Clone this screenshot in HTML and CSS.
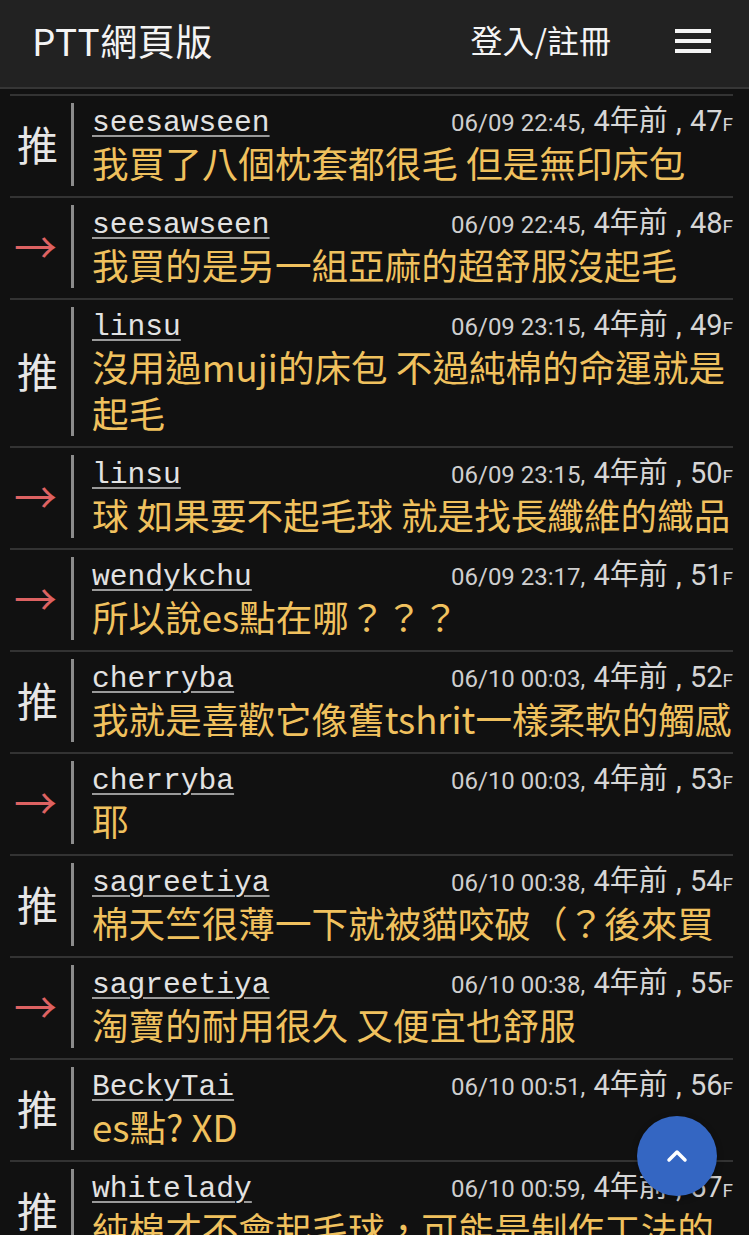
FILE: index.html
```html
<!DOCTYPE html>
<html lang="zh-Hant">
<head>
<meta charset="utf-8">
<title>PTT網頁版</title>
<link rel="stylesheet" href="styles.css">
</head>
<body>
<header class="topbar">
  <div class="brand">PTT網頁版</div>
  <div class="login">登入/註冊</div>
  <div class="menu" aria-label="menu"><span></span><span></span><span></span></div>
</header>
<main class="list">
  <div class="row">
    <div class="tag push">推</div>
    <div class="body">
      <div class="head"><span class="user">seesawseen</span><span class="meta"><span class="time">06/09 22:45,</span> 4年前 , 47<span class="f">F</span></span></div>
      <div class="text">我買了八個枕套都很毛 但是無印床包</div>
    </div>
  </div>
  <div class="row">
    <div class="tag arrow">→</div>
    <div class="body">
      <div class="head"><span class="user">seesawseen</span><span class="meta"><span class="time">06/09 22:45,</span> 4年前 , 48<span class="f">F</span></span></div>
      <div class="text">我買的是另一組亞麻的超舒服沒起毛</div>
    </div>
  </div>
  <div class="row">
    <div class="tag push">推</div>
    <div class="body">
      <div class="head"><span class="user">linsu</span><span class="meta"><span class="time">06/09 23:15,</span> 4年前 , 49<span class="f">F</span></span></div>
      <div class="text">沒用過muji的床包 不過純棉的命運就是起毛</div>
    </div>
  </div>
  <div class="row">
    <div class="tag arrow">→</div>
    <div class="body">
      <div class="head"><span class="user">linsu</span><span class="meta"><span class="time">06/09 23:15,</span> 4年前 , 50<span class="f">F</span></span></div>
      <div class="text">球 如果要不起毛球 就是找長纖維的織品</div>
    </div>
  </div>
  <div class="row">
    <div class="tag arrow">→</div>
    <div class="body">
      <div class="head"><span class="user">wendykchu</span><span class="meta"><span class="time">06/09 23:17,</span> 4年前 , 51<span class="f">F</span></span></div>
      <div class="text">所以說es點在哪？？？</div>
    </div>
  </div>
  <div class="row">
    <div class="tag push">推</div>
    <div class="body">
      <div class="head"><span class="user">cherryba</span><span class="meta"><span class="time">06/10 00:03,</span> 4年前 , 52<span class="f">F</span></span></div>
      <div class="text">我就是喜歡它像舊tshrit一樣柔軟的觸感</div>
    </div>
  </div>
  <div class="row">
    <div class="tag arrow">→</div>
    <div class="body">
      <div class="head"><span class="user">cherryba</span><span class="meta"><span class="time">06/10 00:03,</span> 4年前 , 53<span class="f">F</span></span></div>
      <div class="text">耶</div>
    </div>
  </div>
  <div class="row">
    <div class="tag push">推</div>
    <div class="body">
      <div class="head"><span class="user">sagreetiya</span><span class="meta"><span class="time">06/10 00:38,</span> 4年前 , 54<span class="f">F</span></span></div>
      <div class="text">棉天竺很薄一下就被貓咬破（？後來買</div>
    </div>
  </div>
  <div class="row">
    <div class="tag arrow">→</div>
    <div class="body">
      <div class="head"><span class="user">sagreetiya</span><span class="meta"><span class="time">06/10 00:38,</span> 4年前 , 55<span class="f">F</span></span></div>
      <div class="text">淘寶的耐用很久 又便宜也舒服</div>
    </div>
  </div>
  <div class="row">
    <div class="tag push">推</div>
    <div class="body">
      <div class="head"><span class="user">BeckyTai</span><span class="meta"><span class="time">06/10 00:51,</span> 4年前 , 56<span class="f">F</span></span></div>
      <div class="text">es點? XD</div>
    </div>
  </div>
  <div class="row">
    <div class="tag push">推</div>
    <div class="body">
      <div class="head"><span class="user">whitelady</span><span class="meta"><span class="time">06/10 00:59,</span> 4年前 , 57<span class="f">F</span></span></div>
      <div class="text">純棉才不會起毛球，可能是制作工法的</div>
    </div>
  </div>
</main>
<button class="totop" aria-label="top">
  <svg width="24" height="16" viewBox="0 0 24 16"><path d="M4 12 L12 4 L20 12" fill="none" stroke="#fff" stroke-width="3.5" stroke-linecap="round" stroke-linejoin="round"/></svg>
</button>
</body>
</html>
```
FILE: styles.css
```css
html, body {
  margin: 0;
  padding: 0;
  background: #111111;
}
body {
  font-family: "Noto Sans CJK TC", "Noto Sans", sans-serif;
  color: #e0e0e0;
  height: 1235px;
  overflow: hidden;
}
.topbar {
  height: 89px;
  box-sizing: border-box;
  background: #222222;
  border-bottom: 2px solid #363636;
  display: flex;
  align-items: flex-start;
  padding: 13px 38px 0 32px;
}
.brand {
  font-size: 37px;
  line-height: 54px;
  color: #f4f4f4;
  flex: 1;
  letter-spacing: 0.5px;
}
.login {
  font-size: 32px;
  line-height: 52px;
  color: #f4f4f4;
  margin-right: 64px;
}
.menu {
  width: 36px;
  display: flex;
  flex-direction: column;
  gap: 6.5px;
  padding-top: 16px;
}
.menu span {
  display: block;
  height: 3.5px;
  background: #f4f4f4;
}
.list {
  padding: 5px 16px 0 10px;
}
.row {
  border-top: 2px solid #333333;
  display: flex;
  padding: 7px 0 10px;
}
.tag {
  width: 61px;
  display: flex;
  align-items: center;
  justify-content: center;
  font-size: 41px;
  line-height: 50px;
  padding-right: 6px;
  padding-bottom: 3px;
  box-sizing: border-box;
}
.tag.push {
  color: #e6e6e6;
}
.tag.arrow {
  color: #dd6262;
  font-family: "Noto Sans CJK TC", sans-serif;
  font-size: 43px;
  padding-right: 10px;
}
.body {
  flex: 1;
  border-left: 3px solid #8c8c8c;
  padding-left: 18px;
}
.head {
  display: flex;
  justify-content: space-between;
  align-items: baseline;
  height: 37px;
  line-height: 37px;
}
.user {
  font-family: "Liberation Mono", "Courier New", monospace;
  font-size: 29.6px;
  color: #e2e2e2;
  text-decoration: underline;
  text-decoration-color: #9a9a9a;
  text-underline-offset: 4px;
  text-decoration-thickness: 2px;
}
.meta {
  font-family: Roboto, "Noto Sans CJK TC", sans-serif;
  font-size: 29px;
  color: #d6d6d6;
  white-space: nowrap;
  word-spacing: 1px;
}
.meta .time {
  font-size: 24px;
  color: #cfcfcf;
  word-spacing: 0;
}
.meta .f {
  font-size: 19px;
}
.text {
  font-size: 36.6px;
  line-height: 46px;
  color: #f0c15e;
}
.totop {
  position: fixed;
  left: 637px;
  top: 1116px;
  width: 80px;
  height: 80px;
  border-radius: 50%;
  border: none;
  background: #3466c2;
  display: flex;
  align-items: center;
  justify-content: center;
  padding: 0;
  box-shadow: 0 2px 6px rgba(0,0,0,0.4);
}
```
